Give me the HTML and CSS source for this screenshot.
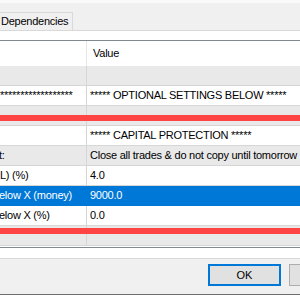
FILE: index.html
```html
<!DOCTYPE html>
<html lang="en">
<head>
  <meta charset="UTF-8">
  <title>Expert Properties</title>
  <link rel="stylesheet" href="styles.css">
</head>
<body>

  <div class="top"></div>

  <!-- tab strip -->
  <div class="tabs">
    <div class="tab">Dependencies</div>
  </div>

  <!-- tab page with the inputs list -->
  <div class="page">
    <div class="list">
      <div class="row head">
        <div class="cell name"></div>
        <div class="cell value">Value</div>
      </div>
      <div class="row alt">
        <div class="cell name"></div>
        <div class="cell value"></div>
      </div>
      <div class="row">
        <div class="cell name">******************</div>
        <div class="cell value">***** OPTIONAL SETTINGS BELOW *****</div>
      </div>
      <div class="row alt">
        <div class="cell name"></div>
        <div class="cell value"></div>
      </div>
      <div class="row">
        <div class="cell name"></div>
        <div class="cell value">***** CAPITAL PROTECTION *****</div>
      </div>
      <div class="row alt">
        <div class="cell name cut">t:</div>
        <div class="cell value">Close all trades &amp; do not copy until tomorrow</div>
      </div>
      <div class="row">
        <div class="cell name">L) (%)</div>
        <div class="cell value">4.0</div>
      </div>
      <div class="row selected">
        <div class="cell name cut">elow X (money)</div>
        <div class="cell value">9000.0</div>
      </div>
      <div class="row">
        <div class="cell name cut">elow X (%)</div>
        <div class="cell value">0.0</div>
      </div>
      <div class="row alt">
        <div class="cell name"></div>
        <div class="cell value"></div>
      </div>
    </div>
  </div>

  <div class="buttons">
    <button class="btn default">OK</button>
    <button class="btn cancel">Cancel</button>
  </div>
  <div class="edge"></div>

  <!-- red marks drawn over the screenshot -->
  <div class="mark mark-one"></div>
  <div class="mark mark-two"></div>

</body>
</html>
```

FILE: styles.css
```css
body {
  margin: 0;
  width: 300px;
  height: 295px;
  overflow: hidden;
  position: relative;
  background: #f0f0f0;
  font-family: "Liberation Sans", Arial, sans-serif;
  font-size: 11px;
  letter-spacing: -0.25px;
  color: #000;
}
.top {
  height: 3px;
  background: #f9f9f9;
}
.tabs {
  height: 27px;
  padding-top: 9px;
  box-sizing: border-box;
}
.tab {
  width: 73px;
  height: 18px;
  box-sizing: border-box;
  border-top: 1px solid #d9d9d9;
  border-right: 1px solid #d9d9d9;
  padding-left: 1px;
  line-height: 17px;
  white-space: nowrap;
}
.page {
  background: white;
  border-top: 1px solid #d9d9d9;
  border-bottom: 1px solid #d9d9d9;
  padding: 9px 0 10px;
}
.list {
  border-top: 1px solid #828790;
  border-bottom: 1px solid #828790;
  padding-bottom: 1px;
  background: white;
}
.row {
  display: flex;
  height: 20px;
  box-sizing: border-box;
  border-bottom: 1px solid #d6d6d6;
  line-height: 19px;
  white-space: nowrap;
}
.row.alt {
  background: #e9e9e9;
}
.row.head {
  height: 25px;
  border-bottom: none;
  line-height: 25px;
}
.row.selected {
  background: #0078d7;
  color: white;
  border-bottom-color: #0078d7;
}
.cell {
  overflow: hidden;
}
.name {
  width: 87px;
  flex: none;
  box-sizing: border-box;
  border-right: 1px solid #d6d6d6;
}
.head .name {
  border-right-color: #e5e5e5;
}
.selected .name {
  border-right-color: #0078d7;
}
.name.cut {
  text-indent: -1px;
}
.value {
  flex: 1;
  padding-left: 3px;
}
.head .value {
  padding-left: 6px;
}
.buttons {
  height: 35px;
  box-sizing: border-box;
  padding: 5px 0 0 208px;
  display: flex;
  gap: 8px;
  overflow: hidden;
}
.btn {
  width: 73px;
  height: 22px;
  flex: none;
  box-sizing: border-box;
  padding: 0;
  background: #e1e1e1;
  border: 1px solid #adadad;
  font: inherit;
  color: #000;
}
.btn.default {
  border: 2px solid #0078d7;
}
.btn.cancel {
  padding-left: 24px;
}
.edge {
  height: 1px;
  background: #6e6e6e;
}
.mark {
  position: absolute;
  left: 0;
  right: 0;
  height: 6px;
  background: #ff4444;
}
.mark-one {
  top: 115px;
}
.mark-two {
  top: 228px;
}
```
